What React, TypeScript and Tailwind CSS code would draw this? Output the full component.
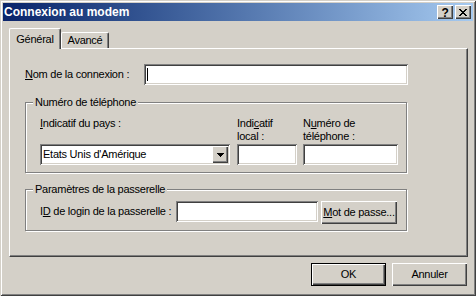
import React from 'react';

// Win2000 style 3D edges
const sunken =
  'bg-white shadow-[inset_1px_1px_0_#808080,inset_-1px_-1px_0_#ffffff,inset_2px_2px_0_#404040,inset_-2px_-2px_0_#d4d0c8]';
const raised =
  'bg-[#d4d0c8] shadow-[inset_1px_1px_0_#ffffff,inset_-1px_-1px_0_#404040,inset_-2px_-2px_0_#808080]';

function GroupBox({ title, className, children }: { title: string; className?: string; children: React.ReactNode }) {
  return (
    <div className={`relative w-[382px] border border-[#808080] shadow-[inset_1px_1px_0_#ffffff,1px_1px_0_#ffffff] ${className ?? ''}`}>
      <span className="absolute -top-[7px] left-[7px] bg-[#d4d0c8] px-[2px] leading-[13px]">{title}</span>
      {children}
    </div>
  );
}

function CloseGlyph() {
  // pixel X glyph, 8x7
  const rows = ['11000011', '01100110', '00111100', '00011000', '00111100', '01100110', '11000011'];
  return (
    <svg width="8" height="7" viewBox="0 0 8 7" shapeRendering="crispEdges">
      {rows.map((r, y) =>
        r.split('').map((c, x) => (c === '1' ? <rect key={`${x}-${y}`} x={x} y={y} width="1" height="1" fill="#000" /> : null))
      )}
    </svg>
  );
}

function ArrowGlyph() {
  return (
    <svg width="7" height="4" viewBox="0 0 7 4" shapeRendering="crispEdges">
      <rect x="0" y="0" width="7" height="1" fill="#000" />
      <rect x="1" y="1" width="5" height="1" fill="#000" />
      <rect x="2" y="2" width="3" height="1" fill="#000" />
      <rect x="3" y="3" width="1" height="1" fill="#000" />
    </svg>
  );
}

export default function App() {
  return (
    <div className="w-[476px] h-[296px] p-[3px] bg-[#d4d0c8] text-black text-[11px] tracking-[-0.25px] font-['Liberation_Sans',Arial,sans-serif] shadow-[inset_1px_1px_0_#d4d0c8,inset_-1px_-1px_0_#404040,inset_2px_2px_0_#ffffff,inset_-2px_-2px_0_#808080]">
      {/* Title bar */}
      <div className="h-[18px] flex items-center pl-[1px] pr-[2px] bg-linear-to-r from-[#0a246a] to-[#a6caf0]">
        <span className="flex-1 text-white font-bold text-[12px] tracking-normal leading-[18px]">Connexion au modem</span>
        <div className={`${raised} w-[16px] h-[14px] flex items-center justify-center font-bold text-[12px] leading-none pt-[1px]`}>?</div>
        <div className={`${raised} ml-[2px] w-[16px] h-[14px] flex items-center justify-center`}>
          <CloseGlyph />
        </div>
      </div>

      <div className="pl-[6px]">
        {/* Tabs */}
        <div className="mt-[7px] flex items-end">
          <div className="relative z-10 -mb-[1px] h-[21px] w-[52px] flex justify-center pt-[4px] leading-[13px] bg-[#d4d0c8] border-l border-t border-white border-r border-r-[#404040] rounded-t-[2px] shadow-[inset_-1px_0_0_#808080]">
            Général
          </div>
          <div className="h-[16px] w-[48px] flex justify-center pt-[1px] leading-[13px] border-l border-t border-white border-r border-r-[#404040] rounded-t-[2px] shadow-[inset_-1px_0_0_#808080]">
            Avancé
          </div>
        </div>

        {/* Tab panel */}
        <div className="w-[459px] border border-t-white border-l-white border-r-[#404040] border-b-[#404040] shadow-[inset_-1px_-1px_0_#808080] pl-[15px] pt-[15px] pb-[25px]">
          <div className="flex items-center h-[21px]">
            <span className="w-[119px] leading-[13px]">
              <span className="underline">N</span>om de la connexion :
            </span>
            <div className={`${sunken} w-[264px] h-[21px] flex items-center pl-[3px]`}>
              <div className="w-px h-[13px] bg-black" />
            </div>
          </div>

          <GroupBox title="Numéro de téléphone" className="mt-[17px] pt-[14px] pl-[14px] pb-[7px]">
            <div className="flex">
              <div className="w-[190px]">
                <div className="h-[26px] leading-[13px]">
                  <span className="underline">I</span>ndicatif du pays :
                </div>
                <div className={`${sunken} mt-[1px] h-[21px] p-[2px] flex`}>
                  <span className="flex-1 pl-[1px] leading-[17px]">Etats Unis d'Amérique</span>
                  <div className={`${raised} w-[16px] h-full flex items-center justify-center`}>
                    <ArrowGlyph />
                  </div>
                </div>
              </div>
              <div className="ml-[7px] w-[60px]">
                <div className="h-[26px] leading-[13px]">
                  Indi<span className="underline">c</span>atif
                  <br />
                  local :
                </div>
                <div className={`${sunken} mt-[1px] h-[21px]`} />
              </div>
              <div className="ml-[6px] w-[95px]">
                <div className="h-[26px] leading-[13px]">
                  N<span className="underline">u</span>méro de
                  <br />
                  téléphone :
                </div>
                <div className={`${sunken} mt-[1px] h-[21px]`} />
              </div>
            </div>
          </GroupBox>

          <GroupBox title="Paramètres de la passerelle" className="mt-[16px] pt-[11px] pl-[14px] pb-[6px]">
            <div className="flex items-start">
              <span className="w-[136px] leading-[21px]">
                I<span className="underline">D</span> de login de la passerelle :
              </span>
              <div className={`${sunken} w-[142px] h-[21px]`} />
              <div className={`${raised} ml-[3px] w-[76px] h-[23px] flex items-center justify-center leading-[13px]`}>
                <span>
                  <span className="underline">M</span>ot de passe...
                </span>
              </div>
            </div>
          </GroupBox>
        </div>

        {/* Dialog buttons */}
        <div className="w-[458px] mt-[6px] flex justify-end gap-[6px]">
          <div className="w-[75px] h-[23px] border border-black">
            <div className={`${raised} w-full h-full flex items-center justify-center leading-[13px]`}>OK</div>
          </div>
          <div className={`${raised} w-[75px] h-[23px] flex items-center justify-center leading-[13px]`}>Annuler</div>
        </div>
      </div>
    </div>
  );
}
